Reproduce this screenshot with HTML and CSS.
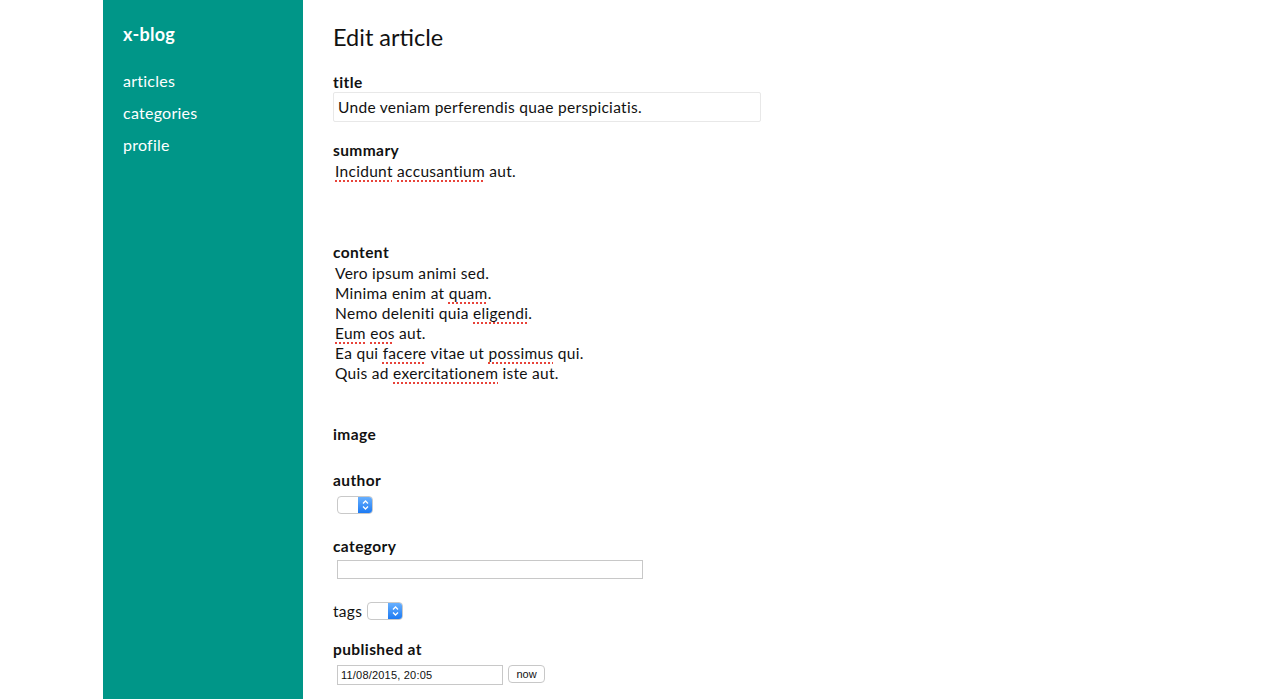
FILE: index.html
```html
<!DOCTYPE html>
<html lang="en">
<head>
<meta charset="utf-8">
<title>x-blog — Edit article</title>
<link rel="stylesheet" href="styles.css">
</head>
<body>
<div class="layout">
  <aside class="sidebar">
    <div class="brand">x-blog</div>
    <nav class="nav">
      <a href="#">articles</a>
      <a href="#">categories</a>
      <a href="#">profile</a>
    </nav>
  </aside>
  <main class="main">
    <h1 class="page-title">Edit article</h1>
    <form class="form">
      <div class="field field-title">
        <label class="label">title</label>
        <div class="text-input">Unde veniam perferendis quae perspiciatis.</div>
      </div>
      <div class="field field-summary">
        <label class="label">summary</label>
        <div class="area area-summary"><span class="sp">Incidunt</span> <span class="sp">accusantium</span> aut.</div>
      </div>
      <div class="field field-content">
        <label class="label">content</label>
        <div class="area area-content">
          <div>Vero ipsum animi sed.</div>
          <div>Minima enim at <span class="sp">quam</span>.</div>
          <div>Nemo deleniti quia <span class="sp">eligendi</span>.</div>
          <div><span class="sp">Eum</span> <span class="sp">eos</span> aut.</div>
          <div>Ea qui <span class="sp">facere</span> vitae ut <span class="sp">possimus</span> qui.</div>
          <div>Quis ad <span class="sp">exercitationem</span> iste aut.</div>
        </div>
      </div>
      <div class="field field-image">
        <label class="label">image</label>
      </div>
      <div class="field field-author">
        <label class="label">author</label>
        <div class="select"><span class="select-body"></span><span class="select-btn"><svg width="9" height="12" viewBox="0 0 9 12"><path d="M2 4.5 L4.5 2 L7 4.5 M2 7.5 L4.5 10 L7 7.5" fill="none" stroke="#fff" stroke-width="1.3"/></svg></span></div>
      </div>
      <div class="field field-category">
        <label class="label">category</label>
        <div class="small-input"></div>
      </div>
      <div class="field field-tags">
        <span class="inline-label">tags</span>
        <div class="select"><span class="select-body"></span><span class="select-btn"><svg width="9" height="12" viewBox="0 0 9 12"><path d="M2 4.5 L4.5 2 L7 4.5 M2 7.5 L4.5 10 L7 7.5" fill="none" stroke="#fff" stroke-width="1.3"/></svg></span></div>
      </div>
      <div class="field field-published">
        <label class="label">published at</label>
        <div class="date-row">
          <div class="date-input">11/08/2015, 20:05</div>
          <button type="button" class="now-btn">now</button>
        </div>
      </div>
    </form>
  </main>
</div>
</body>
</html>
```
FILE: styles.css
```css
* { box-sizing: border-box; }
html, body { margin: 0; padding: 0; background: #fff; }
body {
  font-family: "Lato", "Open Sans", sans-serif;
  color: #111;
  font-size: 15.5px;
  letter-spacing: 0.3px;
}
.layout {
  width: 1068px;
  margin: 0 auto;
  display: flex;
  min-height: 699px;
}
.sidebar {
  width: 200px;
  flex: none;
  background: #009688;
  padding: 23px 20px;
  color: #fff;
}
.brand {
  font-size: 18px;
  font-weight: 700;
  line-height: 22px;
  letter-spacing: 0.3px;
}
.nav {
  margin-top: 20px;
  display: flex;
  flex-direction: column;
}
.nav a {
  color: #fff;
  text-decoration: none;
  font-size: 16px;
  letter-spacing: 0.25px;
  line-height: 32px;
}
.main {
  flex: 1;
  padding: 0 30px;
}
.page-title {
  margin: 22px 0 0;
  font-size: 23.5px;
  font-weight: 400;
  line-height: 30px;
  letter-spacing: 0;
  color: #111;
}
.form { display: flex; flex-direction: column; }
.label {
  display: block;
  font-weight: 700;
  font-size: 15.5px;
  letter-spacing: 0.4px;
  line-height: 18px;
}
.field-title { margin-top: 21px; }
.text-input {
  margin-top: 1px;
  width: 428px;
  height: 30px;
  border: 1px solid #e8e8e8;
  border-radius: 2px;
  padding: 0 4px;
  line-height: 28px;
}
.field-summary { margin-top: 19px; }
.area {
  padding: 2px 2px;
  line-height: 20px;
}
.area-summary { height: 64px; }
.field-content { margin-top: 20px; }
.area-content { height: 145px; }
.sp {
  text-decoration: underline dotted #e8433a;
  text-decoration-thickness: 2px;
  text-underline-offset: 3px;
}
.field-image { margin-top: 19px; }
.field-author { margin-top: 28px; }
.select {
  margin: 7px 0 0 4px;
  width: 36px;
  height: 18px;
  display: flex;
  border: 1px solid #c9c9c9;
  border-radius: 4px;
  overflow: hidden;
  background: #fff;
}
.select-body { flex: 1; }
.select-btn {
  width: 15px;
  display: flex;
  align-items: center;
  justify-content: center;
  background: linear-gradient(#6cb3ff, #1877f2);
  margin: -1px -1px -1px 0;
}
.field-category { margin-top: 23px; }
.small-input {
  margin: 5px 0 0 4px;
  width: 306px;
  height: 19px;
  border: 1px solid #c8c8c8;
}
.field-tags {
  margin-top: 23px;
  display: flex;
  align-items: center;
  height: 18px;
}
.inline-label { line-height: 18px; }
.field-tags .select { margin: 0 0 0 5px; }
.field-published { margin-top: 20px; }
.date-row {
  margin: 7px 0 0 4px;
  display: flex;
  align-items: flex-start;
  gap: 5px;
}
.date-input {
  width: 166px;
  height: 20px;
  border: 1px solid #c8c8c8;
  font-size: 11px;
  letter-spacing: 0.2px;
  line-height: 18px;
  padding: 0 3px;
  font-family: "Liberation Sans", sans-serif;
}
.now-btn {
  width: 37px;
  height: 18px;
  border: 1px solid #c8c8c8;
  border-radius: 4px;
  background: #fff;
  font-size: 11px;
  font-family: "Liberation Sans", sans-serif;
  padding: 0;
  line-height: 16px;
  color: #111;
}
```
